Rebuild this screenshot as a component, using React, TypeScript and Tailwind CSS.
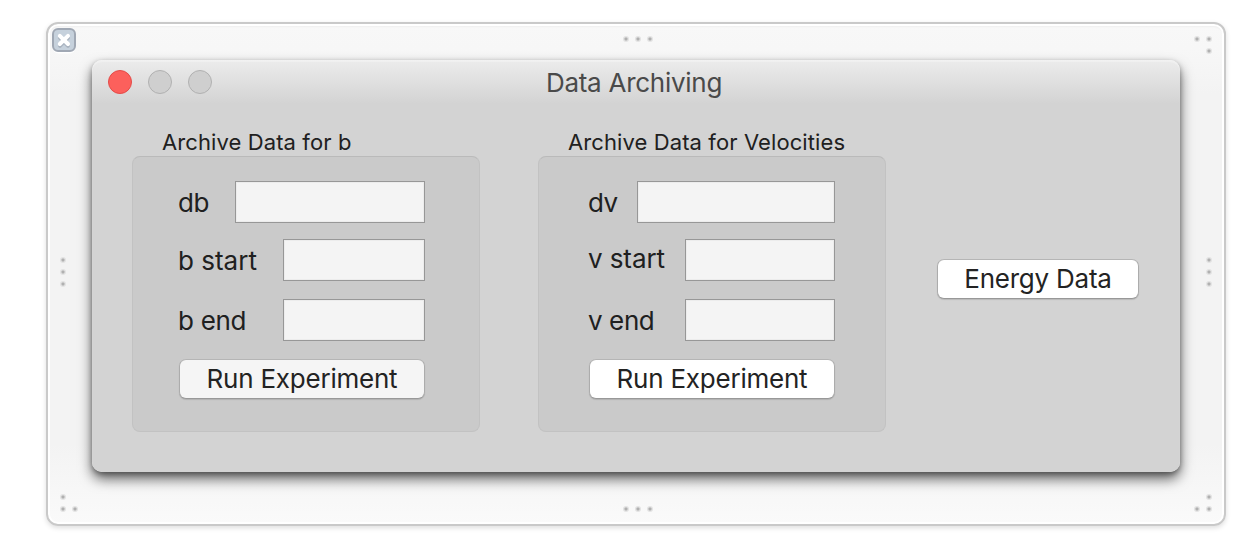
import React from "react";

function Grip({ dots, className = "" }: { dots: [number, number][]; className?: string }) {
  return (
    <svg width="32" height="32" viewBox="0 0 32 32" className={`block shrink-0 ${className}`} aria-hidden="true">
      {dots.map(([x, y]) => (
        <g key={`${x}-${y}`}>
          <circle cx={x} cy={y} r="3" fill="#e3e3e3" />
          <rect x={x - 1.5} y={y - 1.5} width="3" height="3" rx="1" fill="#b0b0b0" />
        </g>
      ))}
    </svg>
  );
}

function CloseBadge() {
  return (
    <svg width="24" height="26" viewBox="0 0 24 26" className="block shrink-0" aria-hidden="true">
      <rect x="0.5" y="1.5" width="23" height="24" rx="6" fill="#ffffff" />
      <rect x="1" y="1" width="22" height="22" rx="5" fill="#c6d1dc" stroke="#a0a8b4" strokeWidth="2" />
      <path d="M8 9.8 L16 17.8 M16 9.8 L8 17.8" stroke="#aab4c0" strokeWidth="4" strokeLinecap="round" />
      <path d="M7.8 7.8 L16 16 M16 7.8 L7.8 16" stroke="#ffffff" strokeWidth="4" strokeLinecap="round" />
    </svg>
  );
}

function PushButton({ label, className }: { label: string; className: string }) {
  return (
    <button
      type="button"
      className={`flex h-10 shrink-0 items-center justify-center whitespace-nowrap rounded-[7px] border border-t-[#b5b5b5] border-x-[#acacac] border-b-[#989898] text-[26px] leading-[38px] tracking-[-0.23px] text-[#232323] shadow-[0_1px_1px_rgba(0,0,0,0.12)] ${className}`}
    >
      {label}
    </button>
  );
}

type Row = { label: string; width: string; gap: string; spacing: string; offset: string };

function Group({ title, titleClass, rows, buttonClass }: { title: string; titleClass: string; rows: Row[]; buttonClass: string }) {
  return (
    <section className="w-[348px] shrink-0">
      <h2 className={`h-7 whitespace-nowrap text-[22px] font-normal leading-7 tracking-[0.1px] text-[#202020] ${titleClass}`}>{title}</h2>
      <div className="h-[276px] rounded-[8px] border border-[#c2c2c2] border-t-[#bababa] bg-[#cacaca] pt-6">
        {rows.map((row) => (
          <label key={row.label} className={`flex h-[42px] items-center justify-between ${row.gap}`}>
            <span className={`whitespace-nowrap text-[26px] leading-[42px] text-[#202020] ${row.spacing} ${row.offset}`}>{row.label}</span>
            <input className={`h-[42px] border border-[#979797] bg-[#f4f4f4] shadow-[inset_0_0_0_1px_#ececec] outline-none ${row.width}`} />
          </label>
        ))}
        <PushButton label="Run Experiment" className={buttonClass} />
      </div>
    </section>
  );
}

export default function App() {
  return (
    <main className="h-[544px] w-[1246px] overflow-hidden bg-white pl-[46px] pt-[22px] font-['Inter','Liberation_Sans',sans-serif]">
      <div className="grid h-[504px] w-[1180px] grid-cols-[44px_1088px_44px] grid-rows-[36px_412px_52px] rounded-[12px] border-2 border-[#c9c9c9] bg-[linear-gradient(#f8f8f8,#f7f7f7_5%,#f3f3f3_14%,#f3f3f3_84%,#fafafa)] shadow-[inset_0_0_0_2px_white,inset_0_3px_2px_rgba(0,0,0,0.04),0_2px_5px_rgba(0,0,0,0.13)]">
        <div className="pl-1 pt-1"><CloseBadge /></div>
        <div className="flex justify-center pl-1"><Grip dots={[[4, 15], [16, 15], [28, 15]]} /></div>
        <div className="pl-[9px]"><Grip dots={[[8, 15], [20, 15], [20, 27]]} /></div>

        <div className="flex items-center pt-3"><Grip dots={[[15, 4], [15, 16], [15, 28]]} /></div>
        <div className="rounded-[10px] bg-[linear-gradient(#ececec,#d3d3d3_44px)] shadow-[inset_0_2px_1px_rgba(255,255,255,0.3),0_7px_13px_rgba(0,0,0,0.6),0_2px_5px_rgba(0,0,0,0.3)]">
          <header className="grid h-[68px] grid-cols-[120px_1fr_120px]">
            <div className="flex gap-4 pl-4 pt-[10px]">
              <span className="h-6 w-6 rounded-full border border-[#e44b48] bg-[#fc605c]" />
              <span className="h-6 w-6 rounded-full border border-[#b1b1b1] bg-[#cfcfcf]" />
              <span className="h-6 w-6 rounded-full border border-[#b1b1b1] bg-[#cfcfcf]" />
            </div>
            <h1 className="h-[45px] whitespace-nowrap pr-1 text-center text-[26px] font-normal leading-[45px] tracking-[-0.27px] text-[#4a4a4a]">Data Archiving</h1>
          </header>
          <div className="flex pl-10">
            <Group
              title="Archive Data for b"
              titleClass="pl-[30px]"
              buttonClass="ml-[46px] mt-[18px] w-[246px] bg-[#f5f5f5]"
              rows={[
                { label: "db", width: "w-[190px]", gap: "ml-[45px] mr-[54px]", spacing: "tracking-[-0.3px]", offset: "pt-0.5" },
                { label: "b start", width: "w-[142px]", gap: "ml-[45px] mr-[54px] mt-4", spacing: "", offset: "pt-0.5" },
                { label: "b end", width: "w-[142px]", gap: "ml-[45px] mr-[54px] mt-[18px]", spacing: "tracking-[-0.3px]", offset: "pt-0.5" },
              ]}
            />
            <div className="w-[58px] shrink-0" />
            <Group
              title="Archive Data for Velocities"
              titleClass="pl-[30px]"
              buttonClass="ml-[50px] mt-[18px] w-[246px] bg-white"
              rows={[
                { label: "dv", width: "w-[198px]", gap: "ml-[49px] mr-[50px]", spacing: "tracking-[-0.6px]", offset: "pt-0.5" },
                { label: "v start", width: "w-[150px]", gap: "ml-[49px] mr-[50px] mt-4", spacing: "tracking-[-0.1px]", offset: "pb-0.5" },
                { label: "v end", width: "w-[150px]", gap: "ml-[49px] mr-[50px] mt-[18px]", spacing: "tracking-[-0.4px]", offset: "pt-0.5" },
              ]}
            />
            <div className="pl-[51px] pt-[131px]">
              <PushButton label="Energy Data" className="w-[202px] bg-white" />
            </div>
          </div>
        </div>
        <div className="flex items-center pt-3"><Grip dots={[[17, 4], [17, 16], [17, 28]]} className="ml-[12px]" /></div>

        <div className="pt-[13px]"><Grip dots={[[15, 12], [15, 24], [27, 24]]} /></div>
        <div className="flex justify-center pl-1 pt-[19px]"><Grip dots={[[4, 18], [16, 18], [28, 18]]} /></div>
        <div className="pl-[9px] pt-[13px]"><Grip dots={[[20, 12], [8, 24], [20, 24]]} /></div>
      </div>
    </main>
  );
}
